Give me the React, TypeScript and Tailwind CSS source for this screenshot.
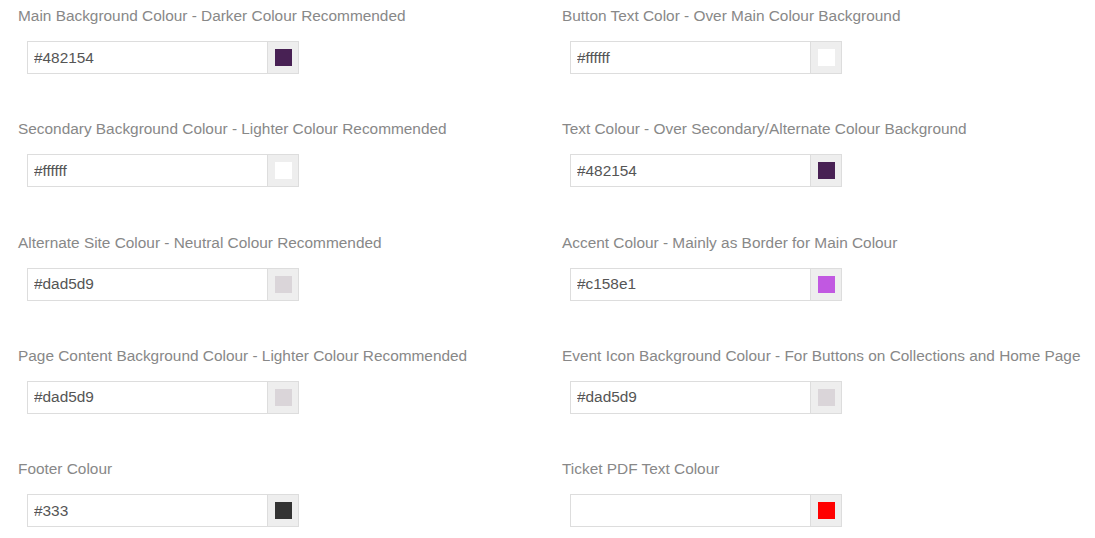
import React from "react";

type Field = { label: string; value: string; swatch: string };

const left: Field[] = [
  { label: "Main Background Colour - Darker Colour Recommended", value: "#482154", swatch: "#482154" },
  { label: "Secondary Background Colour - Lighter Colour Recommended", value: "#ffffff", swatch: "#ffffff" },
  { label: "Alternate Site Colour - Neutral Colour Recommended", value: "#dad5d9", swatch: "#dad5d9" },
  { label: "Page Content Background Colour - Lighter Colour Recommended", value: "#dad5d9", swatch: "#dad5d9" },
  { label: "Footer Colour", value: "#333", swatch: "#333333" },
];

const right: Field[] = [
  { label: "Button Text Color - Over Main Colour Background", value: "#ffffff", swatch: "#ffffff" },
  { label: "Text Colour - Over Secondary/Alternate Colour Background", value: "#482154", swatch: "#482154" },
  { label: "Accent Colour - Mainly as Border for Main Colour", value: "#c158e1", swatch: "#c158e1" },
  { label: "Event Icon Background Colour - For Buttons on Collections and Home Page", value: "#dad5d9", swatch: "#dad5d9" },
  { label: "Ticket PDF Text Colour", value: "", swatch: "#ff0000" },
];

function ColorField({ f, right }: { f: Field; right?: boolean }) {
  return (
    <div className="h-[113.25px]">
      <div className="whitespace-nowrap text-[15.4px] leading-[20px] text-[#888888]">{f.label}</div>
      <div className={(right ? "ml-[8px]" : "ml-[9px]") + " mt-[15px] flex h-[33px] w-[272px]"}>
        <input
          readOnly
          value={f.value}
          className="h-full min-w-0 flex-1 border border-[#dddddd] bg-white px-[6px] text-[15.4px] text-[#555555] outline-none"
          style={{ fontFamily: '"Liberation Sans", Arial, sans-serif' }}
        />
        <div className="flex h-full w-[31px] shrink-0 items-center justify-center border border-l-0 border-[#dddddd] bg-[#eeeeee]">
          <div className="h-[17px] w-[17px]" style={{ backgroundColor: f.swatch }} />
        </div>
      </div>
    </div>
  );
}

export default function App() {
  return (
    <div
      className="h-[538px] w-[1095px] overflow-hidden bg-white pl-[18px] pt-[6px]"
      style={{ fontFamily: '"Liberation Sans", Arial, sans-serif' }}
    >
      <div className="flex">
        <div className="w-[544px]">
          {left.map((f, i) => (
            <ColorField key={i} f={f} />
          ))}
        </div>
        <div className="w-[533px]">
          {right.map((f, i) => (
            <ColorField key={i} f={f} right />
          ))}
        </div>
      </div>
    </div>
  );
}
